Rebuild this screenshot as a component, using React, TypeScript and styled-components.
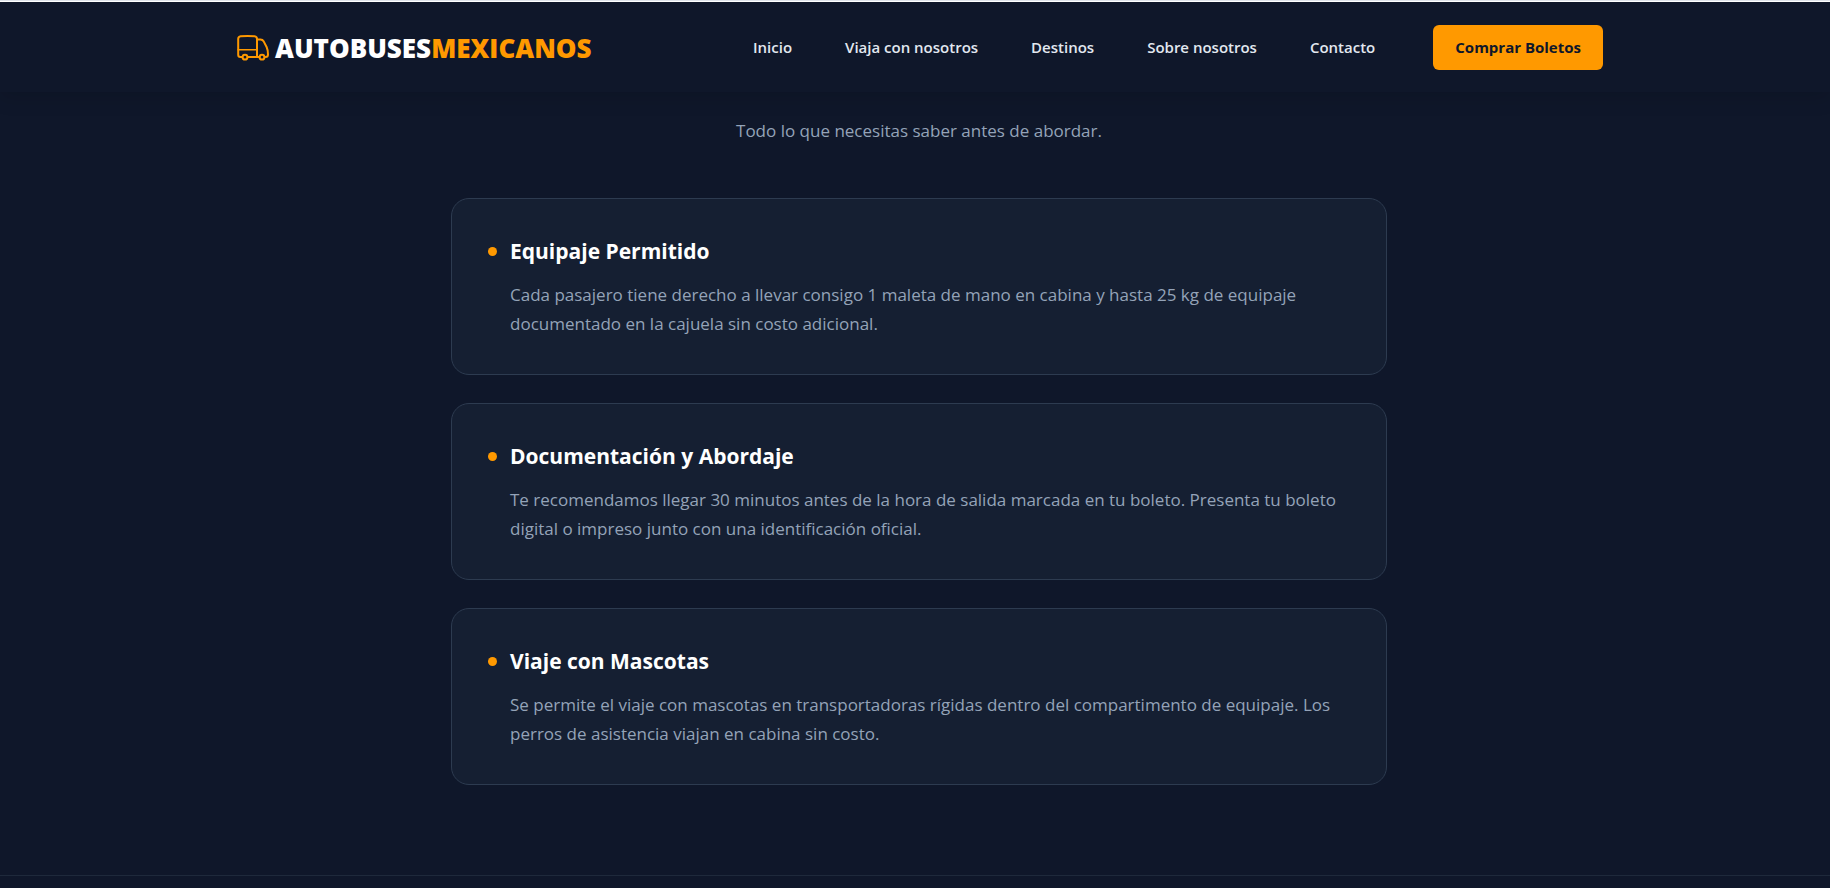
import React from "react";
import styled, { createGlobalStyle } from "styled-components";

const GlobalStyle = createGlobalStyle`
  * {
    box-sizing: border-box;
  }
  body {
    margin: 0;
    background: #0f172a;
    color: #ffffff;
    font-family: "Open Sans", "Noto Sans", sans-serif;
  }
`;

const Page = styled.div`
  display: flex;
  flex-direction: column;
  min-height: 100vh;
  border-top: 1px solid #dfe3ea;
  overflow: hidden;
`;

const Header = styled.header`
  padding: 0 16px 0 26px;
  border-top: 1px solid #ffffff;
  background: #0f172a;
  box-shadow: 0 4px 20px rgba(0, 0, 0, 0.15);
`;

const HeaderInner = styled.div`
  display: flex;
  align-items: center;
  justify-content: space-between;
  max-width: 1366px;
  height: 90px;
  margin: 0 auto;
`;

const Logo = styled.a`
  display: flex;
  align-items: center;
  gap: 6px;
  padding-top: 2px;
  color: #ffffff;
  font-size: 26px;
  line-height: 36px;
  font-weight: 800;
  text-decoration: none;
`;

const LogoAccent = styled.span`
  color: #ff9900;
`;

const BusDrawing = styled.svg`
  display: block;
  width: 32px;
  height: 28px;
  fill: none;
  stroke: #ff9900;
  stroke-width: 2;
  stroke-linecap: round;
  stroke-linejoin: round;
`;

const Nav = styled.nav`
  display: flex;
  align-items: center;
  gap: 58px;
`;

const NavList = styled.ul`
  display: flex;
  gap: 53px;
  margin: 0;
  padding: 0;
  list-style: none;
`;

const NavLink = styled.a`
  color: #e2e8f0;
  font-size: 15px;
  line-height: 24px;
  font-weight: 600;
  text-decoration: none;
`;

const BuyButton = styled.button`
  height: 45px;
  padding: 0 22px;
  border: 0;
  border-radius: 6px;
  background: #ff9900;
  color: #0f172a;
  font: inherit;
  font-size: 15px;
  font-weight: 700;
  cursor: pointer;
`;

const Main = styled.main`
  flex: 1;
  width: 100%;
  padding: 24px 16px 90px 24px;
`;

const Content = styled.section`
  max-width: 936px;
  margin: 0 auto;
`;

const Intro = styled.p`
  margin: 0 0 53px;
  color: #94a3b8;
  font-size: 17px;
  line-height: 29px;
  text-align: center;
`;

const CardList = styled.div`
  display: flex;
  flex-direction: column;
  gap: 28px;
`;

const Card = styled.article`
  display: grid;
  grid-template-columns: 9px 1fr;
  column-gap: 13px;
  row-gap: 13px;
  align-items: center;
  padding: 36px;
  border: 1px solid #2d3b50;
  border-radius: 18px;
  background: #151f32;
`;

const Dot = styled.span`
  width: 9px;
  height: 9px;
  border-radius: 50%;
  background: #ff9900;
`;

const CardTitle = styled.h2`
  margin: 0;
  font-size: 21px;
  line-height: 32px;
  font-weight: 700;
`;

const CardText = styled.p`
  grid-column: 2;
  margin: 0;
  color: #94a3b8;
  font-size: 17px;
  line-height: 29px;
`;

const Footer = styled.footer`
  height: 14px;
  border-top: 1px solid #1e293b;
`;

const links = ["Inicio", "Viaja con nosotros", "Destinos", "Sobre nosotros", "Contacto"];

const policies = [
  {
    title: "Equipaje Permitido",
    text: "Cada pasajero tiene derecho a llevar consigo 1 maleta de mano en cabina y hasta 25 kg de equipaje documentado en la cajuela sin costo adicional.",
  },
  {
    title: "Documentación y Abordaje",
    text: "Te recomendamos llegar 30 minutos antes de la hora de salida marcada en tu boleto. Presenta tu boleto digital o impreso junto con una identificación oficial.",
  },
  {
    title: "Viaje con Mascotas",
    text: "Se permite el viaje con mascotas en transportadoras rígidas dentro del compartimento de equipaje. Los perros de asistencia viajan en cabina sin costo.",
  },
];

function BusIcon() {
  return (
    <BusDrawing viewBox="0 0 32 28" aria-hidden="true">
      <path d="M5 23H3.4Q1.2 23 1.2 20.8V5Q1.2 2.6 3.6 2.3Q10.5 1.5 17.6 2.3Q20 2.6 20 5V23H11" />
      <path d="M1.2 15.8H20" strokeWidth="1.6" />
      <path d="M20 5.6H23.5Q25.6 5.6 26.8 7.6L29.6 13Q31 16 31 20.5Q31 23 28.6 23" />
      <path d="M20 23H22.4" />
      <circle cx="8" cy="23.2" r="2.4" />
      <circle cx="25" cy="23.2" r="2.4" />
    </BusDrawing>
  );
}

export default function App() {
  return (
    <>
      <GlobalStyle />
      <Page>
        <Header>
          <HeaderInner>
            <Logo href="#inicio">
              <BusIcon />
              <span>
                AUTOBUSES<LogoAccent>MEXICANOS</LogoAccent>
              </span>
            </Logo>
            <Nav>
              <NavList>
                {links.map((label) => (
                  <li key={label}>
                    <NavLink href="#">{label}</NavLink>
                  </li>
                ))}
              </NavList>
              <BuyButton type="button">Comprar Boletos</BuyButton>
            </Nav>
          </HeaderInner>
        </Header>
        <Main>
          <Content>
            <Intro>Todo lo que necesitas saber antes de abordar.</Intro>
            <CardList>
              {policies.map(({ title, text }) => (
                <Card key={title}>
                  <Dot />
                  <CardTitle>{title}</CardTitle>
                  <CardText>{text}</CardText>
                </Card>
              ))}
            </CardList>
          </Content>
        </Main>
        <Footer />
      </Page>
    </>
  );
}
